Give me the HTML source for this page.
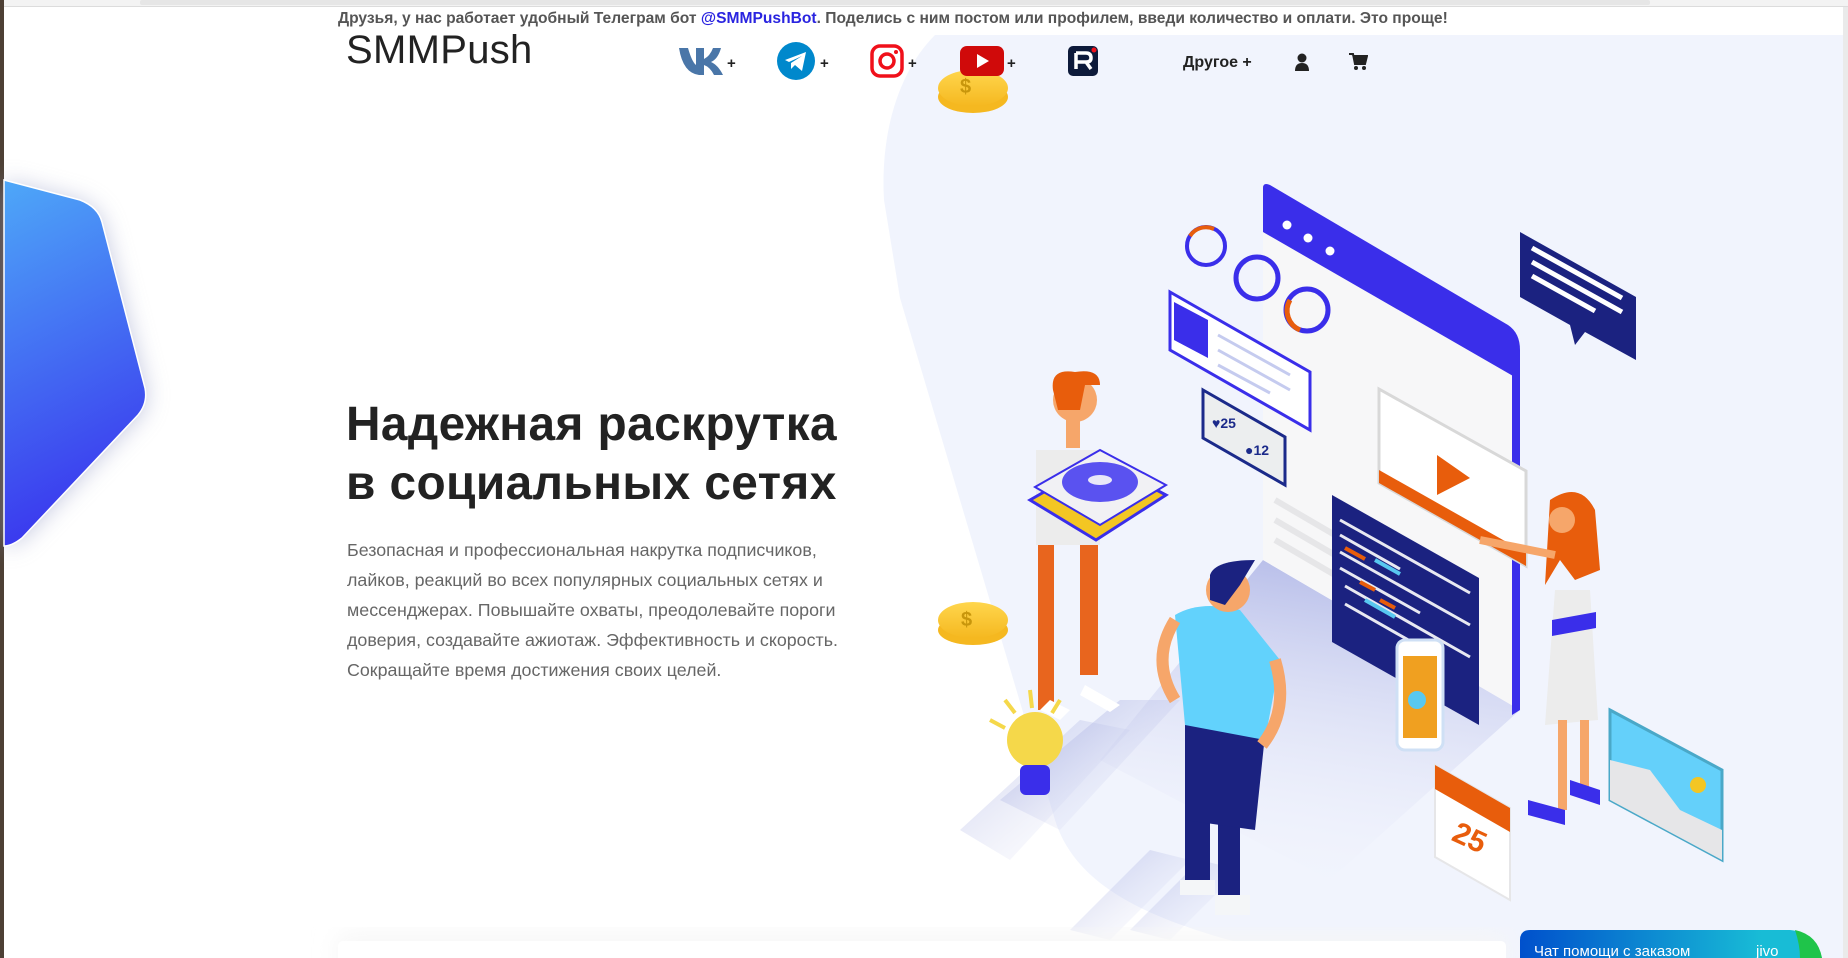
<!DOCTYPE html>
<html><head><meta charset="utf-8">
<style>
html,body{margin:0;padding:0;width:1848px;height:958px;overflow:hidden;background:#fff;font-family:"Liberation Sans",sans-serif;}
#wrap{position:relative;width:1848px;height:958px;overflow:hidden;}
.abs{position:absolute;}
.top{left:338px;top:10px;font-size:15.6px;font-weight:bold;color:#555;white-space:nowrap;}
.top a{color:#2a24e0;text-decoration:none;}
.logo{left:346px;top:28px;font-size:40px;color:#222;letter-spacing:0.3px;}
.plus{font-size:15px;font-weight:bold;color:#222;}
h1{position:absolute;left:346px;top:395px;margin:0;font-size:47.8px;line-height:59px;font-weight:bold;color:#222;white-space:nowrap;letter-spacing:0.4px;}
p.d{position:absolute;left:347px;top:535px;margin:0;font-size:17.85px;line-height:30px;color:#666;white-space:nowrap;}
.nav{font-size:16px;font-weight:bold;color:#222;}
</style></head><body><div id="wrap">
<svg class="abs" style="left:0;top:0" width="1848" height="958" viewBox="0 0 1848 958">
<defs>
<linearGradient id="hx" x1="0" y1="0" x2="0.2" y2="1"><stop offset="0" stop-color="#4ea8f8"/><stop offset="1" stop-color="#3a37ee"/></linearGradient>
<filter id="sh" x="-50%" y="-20%" width="200%" height="140%"><feGaussianBlur stdDeviation="12"/></filter>
<linearGradient id="fl" x1="0" y1="0" x2="1" y2="1"><stop offset="0" stop-color="#8f98d8"/><stop offset="1" stop-color="#eef0fb" stop-opacity="0"/></linearGradient>
<linearGradient id="fl2" x1="0.5" y1="0" x2="0.3" y2="1"><stop offset="0" stop-color="#a9b0e4"/><stop offset="1" stop-color="#eef0fb" stop-opacity="0"/></linearGradient>
<linearGradient id="chat" x1="0" y1="0" x2="1" y2="0"><stop offset="0" stop-color="#0050cc"/><stop offset="0.8" stop-color="#18bcd6"/></linearGradient>
<linearGradient id="coin" x1="0" y1="0" x2="0" y2="1"><stop offset="0" stop-color="#ffd64d"/><stop offset="1" stop-color="#f5b820"/></linearGradient>
</defs>
<rect x="0" y="0" width="1848" height="7" fill="#f3f3f3"/>
<rect x="140" y="0" width="1510" height="5" rx="2" fill="#e6e6e6"/>
<rect x="0" y="6" width="1848" height="1" fill="#dcdcdc"/>
<rect x="0" y="0" width="4" height="958" fill="#4d4035"/>
<rect x="1843" y="7" width="5" height="951" fill="#eaeaea"/>
<path d="M935 35 L1843 35 L1843 958 L1300 958 C1180 930 1080 900 1055 820 L900 298 L884 200 C880 130 900 70 935 35 Z" fill="#f1f4fd"/>
<path d="M4 182 L80 202 Q98 210 102 225 L145 390 Q147 405 138 416 L24 536 Q14 546 4 546 Z" fill="#9aa0c8" filter="url(#sh)" opacity="0.6"/>
<path d="M4 180 L80 200 Q98 207 102 222 L145 388 Q148 403 138 415 L22 538 Q12 546 4 546 Z" fill="url(#hx)" stroke="#fff" stroke-width="1.5"/>
<!-- floor shadow -->
<path d="M1263 560 L1520 710 L1330 880 L1100 760 Z" fill="url(#fl2)" opacity="0.8"/>
<path d="M1000 800 L1120 700 L1180 700 L1060 830 Z" fill="url(#fl)" opacity="0.6"/>
<path d="M960 830 L1080 720 L1130 730 L1010 860 Z" fill="url(#fl)" opacity="0.5"/>
<path d="M1130 930 L1200 860 L1240 870 L1170 940 Z" fill="url(#fl)" opacity="0.5"/>
<path d="M1070 930 L1150 850 L1190 860 L1110 940 Z" fill="url(#fl)" opacity="0.5"/>
<path d="M1263 188 L1510 330 Q1520 337 1520 350 L1520 710 L1263 560 Z" fill="#f7f7f8"/>
<path d="M1263 188 Q1263 182 1270 185 L1508 325 Q1520 333 1520 350 L1520 380 L1263 232 Z" fill="#3a2eea"/>
<path d="M1520 350 L1520 710 L1512 715 L1512 345 Z" fill="#3a2eea"/>
<circle cx="1287" cy="225" r="4.5" fill="#fff"/><circle cx="1308" cy="238" r="4.5" fill="#fff"/><circle cx="1330" cy="251" r="4.5" fill="#fff"/>
<circle cx="1206" cy="246" r="19" fill="none" stroke="#3a2eea" stroke-width="4"/>
<path d="M1190 236 A19 19 0 0 1 1214 229" fill="none" stroke="#e85d0c" stroke-width="4"/>
<circle cx="1257" cy="278" r="21" fill="none" stroke="#3a2eea" stroke-width="5"/>
<circle cx="1307" cy="310" r="21" fill="none" stroke="#3a2eea" stroke-width="5"/>
<path d="M1290 300 A21 21 0 0 0 1300 330" fill="none" stroke="#e85d0c" stroke-width="5"/>
<path d="M1170 292 L1310 372 L1310 430 L1170 350 Z" fill="#fff" stroke="#3a2eea" stroke-width="3"/>
<path d="M1174 302 L1208 320 L1208 358 L1174 340 Z" fill="#3a2eea"/>
<path d="M1218 335 L1290 375 M1218 350 L1290 390 M1218 365 L1270 393" stroke="#c5cbef" stroke-width="3"/>
<path d="M1203 390 L1285 437 L1285 485 L1203 438 Z" fill="#eceeef" stroke="#1b2a8a" stroke-width="3"/>
<text x="1212" y="428" font-size="14" font-weight="bold" fill="#1b2a8a" font-family="Liberation Sans">♥25</text>
<text x="1245" y="455" font-size="14" font-weight="bold" fill="#1b2a8a" font-family="Liberation Sans">●12</text>
<path d="M1275 500 L1340 538 M1275 520 L1340 558 M1275 540 L1340 578" stroke="#e6e6e8" stroke-width="6"/>
<path d="M1520 232 L1636 297 L1636 360 L1585 332 L1575 345 L1570 325 L1520 297 Z" fill="#1b2280"/>
<path d="M1532 248 L1622 298 M1532 262 L1622 312 M1532 276 L1595 311" stroke="#fff" stroke-width="5"/>
<path d="M1379 389 L1526 471 L1526 566 L1379 483 Z" fill="#fff" stroke="#d8d8d8" stroke-width="3"/>
<path d="M1379 470 L1526 553 L1526 566 L1379 483 Z" fill="#e85d0c"/>
<path d="M1437 455 L1470 478 L1437 495 Z" fill="#e85d0c"/>
<path d="M1332 495 L1479 578 L1479 725 L1332 642 Z" fill="#1b2280"/>
<path d="M1340 520 L1470 593 M1340 535 L1400 569 M1340 552 L1470 625 M1340 568 L1420 613 M1345 586 L1470 657 M1345 604 L1440 658" stroke="#fff" stroke-width="3" opacity="0.9"/>
<path d="M1345 548 L1365 559 M1360 582 L1375 590 M1380 600 L1395 608" stroke="#e85d0c" stroke-width="4"/>
<path d="M1375 560 L1400 574 M1365 600 L1395 617" stroke="#58c8f0" stroke-width="4"/>
<rect x="1397" y="640" width="46" height="110" rx="8" fill="#fff" stroke="#cfe0f5" stroke-width="3"/>
<rect x="1403" y="656" width="34" height="82" fill="#f0a020"/>
<circle cx="1417" cy="700" r="9" fill="#58c8f0"/>
<rect x="1038" y="545" width="16" height="165" fill="#e8651e"/><rect x="1080" y="545" width="18" height="130" fill="#e8651e"/>
<path d="M1036 450 L1100 450 L1100 545 L1036 545 Z" fill="#ececec"/>
<circle cx="1075" cy="400" r="22" fill="#f6a66a"/>
<path d="M1053 390 Q1050 368 1075 372 Q1100 368 1100 385 L1085 385 L1080 410 L1058 410 Z" fill="#e85d0c"/>
<rect x="1066" y="420" width="14" height="28" fill="#f6a66a"/>
<path d="M1030 500 L1100 460 L1166 495 L1096 540 Z" fill="#f3c623" stroke="#3a2eea" stroke-width="3"/>
<path d="M1035 487 L1100 450 L1166 485 L1100 525 Z" fill="#f1f1f4" stroke="#3a2eea" stroke-width="2"/>
<ellipse cx="1100" cy="482" rx="38" ry="20" fill="#5a52f0"/>
<ellipse cx="1100" cy="480" rx="12" ry="5" fill="#e8e8f8"/>
<path d="M1040 710 L1060 720 L1070 710 L1050 700 Z" fill="#fff"/>
<path d="M1085 685 L1120 705 L1110 712 L1080 695 Z" fill="#fff"/>
<path d="M1185 818 L1210 818 L1210 880 L1185 880 Z M1218 805 L1240 805 L1240 895 L1218 895 Z" fill="#1b2280"/>
<path d="M1185 720 L1265 735 L1255 830 L1185 820 Z" fill="#1b2280"/>
<path d="M1175 615 Q1200 600 1240 610 L1280 660 L1265 740 L1185 725 Z" fill="#62d2fc"/>
<path d="M1175 620 Q1150 660 1175 700" stroke="#f6a66a" stroke-width="12" fill="none"/>
<path d="M1275 660 Q1290 710 1262 745" stroke="#f6a66a" stroke-width="12" fill="none"/>
<circle cx="1228" cy="590" r="22" fill="#f6a66a"/>
<path d="M1210 575 Q1215 560 1255 560 L1240 585 L1225 605 L1210 600 Z" fill="#1b2280"/>
<path d="M1180 880 L1215 880 L1215 895 L1180 895 Z M1215 895 L1250 895 L1250 915 L1215 915 Z" fill="#f4f6f8"/>
<path d="M1555 590 L1590 590 L1598 720 L1545 725 Z" fill="#ececec"/>
<path d="M1552 620 L1596 612 L1596 628 L1552 636 Z" fill="#3a2eea"/>
<path d="M1550 500 Q1580 480 1595 510 L1600 570 L1575 580 L1560 560 L1545 585 Z" fill="#e85d0c"/>
<circle cx="1562" cy="520" r="13" fill="#f6a66a"/>
<path d="M1555 555 L1480 540" stroke="#f6a66a" stroke-width="8"/>
<rect x="1558" y="720" width="9" height="90" fill="#f6a66a"/><rect x="1580" y="720" width="9" height="70" fill="#f6a66a"/>
<path d="M1528 800 L1565 810 L1565 825 L1528 815 Z M1570 780 L1600 790 L1600 805 L1570 795 Z" fill="#3a2eea"/>
<path d="M1610 710 L1722 770 L1722 860 L1610 800 Z" fill="#64d0fa" stroke="#4aa8c8" stroke-width="3"/>
<path d="M1610 760 L1650 770 L1680 810 L1722 830 L1722 860 L1610 800 Z" fill="#e6e6e8"/>
<circle cx="1698" cy="785" r="8" fill="#f3c623"/>
<path d="M1435 765 L1510 808 L1510 900 L1435 857 Z" fill="#fff" stroke="#e6e6e8" stroke-width="2"/>
<path d="M1435 765 L1510 808 L1510 832 L1435 789 Z" fill="#e85d0c"/>
<text x="1452" y="848" font-size="30" font-weight="bold" fill="#e85d0c" font-family="Liberation Sans" transform="rotate(25 1470 840)">25</text>
<ellipse cx="973" cy="97" rx="35" ry="16" fill="#f5b820"/><ellipse cx="973" cy="88" rx="35" ry="18" fill="url(#coin)"/>
<text x="960" y="93" font-size="20" font-weight="bold" fill="#c8960c" font-family="Liberation Sans">$</text>
<ellipse cx="973" cy="630" rx="35" ry="15" fill="#f5b820"/><ellipse cx="973" cy="620" rx="35" ry="18" fill="url(#coin)"/>
<text x="961" y="626" font-size="20" font-weight="bold" fill="#c8960c" font-family="Liberation Sans">$</text>
<circle cx="1035" cy="740" r="28" fill="#f5d84a"/>
<rect x="1020" y="765" width="30" height="30" rx="6" fill="#3a2eea"/>
<path d="M990 720 L1005 728 M1005 700 L1015 713 M1030 690 L1032 708 M1060 700 L1052 713" stroke="#f5d84a" stroke-width="4"/>
<rect x="338" y="935" width="1168" height="40" rx="6" fill="#f6f6f6" filter="url(#sh)"/>
<rect x="338" y="941" width="1168" height="30" rx="5" fill="#fff"/>
<path d="M1530 930 L1790 930 Q1815 932 1822 958 L1520 958 L1520 940 Q1520 930 1530 930 Z" fill="url(#chat)"/>
<path d="M1795 930 Q1818 935 1822 958 L1800 958 Q1800 945 1795 930 Z" fill="#1fc44a"/>
<text x="1534" y="956" font-size="15" fill="#fff" font-family="Liberation Sans">Чат помощи с заказом</text>
<text x="1756" y="956" font-size="15" fill="#fff" font-family="Liberation Sans">jivo</text>
</svg>

<div class="abs top">Друзья, у нас работает удобный Телеграм бот <a>@SMMPushBot</a>. Поделись с ним постом или профилем, введи количество и оплати. Это проще!</div>
<div class="abs logo">SMMPush</div>

<svg class="abs" style="left:679px;top:46px" width="46" height="30" viewBox="0 0 46 30"><path d="M0 2 L9 2 Q13 16 17 19 L17 2 L25 2 L25 13 Q31 10 34 2 L42 2 Q39 13 32 16 Q39 19 44 29 L35 29 Q31 21 25 19 L25 29 L20 29 Q4 27 0 2 Z" fill="#4a76a8"/></svg>
<span class="abs plus" style="left:727px;top:55px">+</span>
<svg class="abs" style="left:777px;top:42px" width="38" height="38" viewBox="0 0 38 38"><circle cx="19" cy="19" r="19" fill="#0088cc"/><path d="M8 18 L29 10 L25 29 L18 23 L14 27 L14 21 L25 14 L12 20 Z" fill="#fff"/></svg>
<span class="abs plus" style="left:820px;top:55px">+</span>
<svg class="abs" style="left:870px;top:44px" width="34" height="34" viewBox="0 0 34 34"><rect x="2" y="2" width="30" height="30" rx="8" fill="none" stroke="#f0101a" stroke-width="3.5"/><circle cx="17" cy="17" r="7" fill="none" stroke="#f0101a" stroke-width="3.5"/><circle cx="26" cy="8" r="2" fill="#f0101a"/></svg>
<span class="abs plus" style="left:908px;top:55px">+</span>
<svg class="abs" style="left:960px;top:46px" width="44" height="30" viewBox="0 0 44 30"><rect x="0" y="0" width="44" height="30" rx="7" fill="#d00a0a"/><path d="M17 8 L29 15 L17 22 Z" fill="#fff"/></svg>
<span class="abs plus" style="left:1007px;top:55px">+</span>
<svg class="abs" style="left:1068px;top:46px" width="30" height="30" viewBox="0 0 30 30"><rect width="30" height="30" rx="5" fill="#0d1a3a"/><path d="M8 7 L18 7 Q23 7 23 12 Q23 16 18 16 L23 23 M8 7 L8 23 M8 16 L18 16" fill="none" stroke="#fff" stroke-width="3.5"/><circle cx="26" cy="4" r="2.5" fill="#f0101a"/></svg>
<span class="abs nav" style="left:1183px;top:54px">Другое +</span>
<svg class="abs" style="left:1294px;top:53px" width="16" height="18" viewBox="0 0 16 18"><circle cx="8" cy="5" r="4.5" fill="#222"/><path d="M1 18 Q1 10 8 10 Q15 10 15 18 Z" fill="#222"/></svg>
<svg class="abs" style="left:1349px;top:53px" width="19" height="18" viewBox="0 0 19 18"><path d="M0 1 L4 1 L6 11 L16 11 L18 3 L5 3" fill="#222" stroke="#222" stroke-width="2"/><circle cx="7" cy="15" r="2" fill="#222"/><circle cx="15" cy="15" r="2" fill="#222"/></svg>

<h1>Надежная раскрутка<br>в социальных сетях</h1>
<p class="d">Безопасная и профессиональная накрутка подписчиков,<br>лайков, реакций во всех популярных социальных сетях и<br>мессенджерах. Повышайте охваты, преодолевайте пороги<br>доверия, создавайте ажиотаж. Эффективность и скорость.<br>Сокращайте время достижения своих целей.</p>
</div></body></html>
